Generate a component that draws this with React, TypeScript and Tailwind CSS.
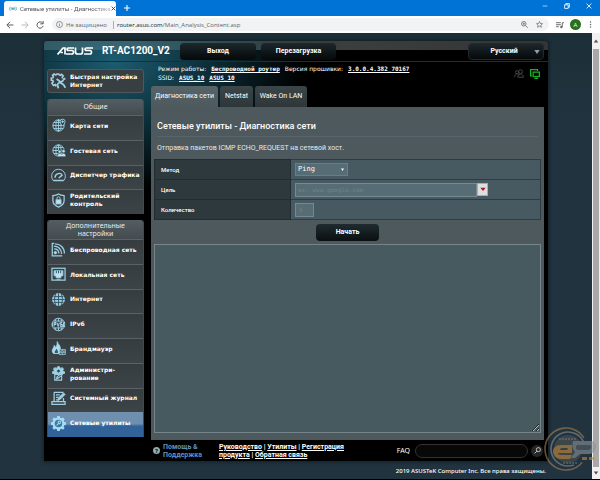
import React from "react";

type IconName =
  | "setup" | "map" | "guest" | "traffic" | "parental" | "wifi" | "lan"
  | "globe" | "ipv6" | "firewall" | "admin" | "log" | "tools";

const gearPath =
  "M10 1.5h4l.6 2.8 2 .9 2.5-1.5 2.7 2.8-1.5 2.4.9 2.1 2.8.6v3.9l-2.8.7-.9 2 1.5 2.5-2.7 2.7-2.5-1.5-2 .9-.6 2.7h-4l-.6-2.7-2-.9-2.5 1.5-2.7-2.7 1.5-2.5-.9-2L0 15.5v-3.9l2.8-.6.9-2.1-1.5-2.4 2.7-2.8 2.5 1.5 2-.9z";

function Globe() {
  return (
    <>
      <circle cx="12" cy="12" r="9" />
      <ellipse cx="12" cy="12" rx="4.2" ry="9" />
      <path d="M12 3v18M3 12h18M4.5 7.3h15M4.5 16.7h15" />
    </>
  );
}

function MenuIcon({ name }: { name: IconName }) {
  const shapes: Record<IconName, React.ReactNode> = {
    setup: (
      <>
        <path d="M8 20l-1-3-3 1.500L1.500 15 3.500 12.500 3 10.500.500 10V6.500L3 6l.8-2L2.500 2 5 0l2.500 1.500L9 1l.5-1h3l.8 1.500L15 2l2-1.500L19.500 3 18 5.500l.5 1.500" strokeWidth="2.600" />
        <path d="M9 8l7 5 4-3M14 13l-4 4 2 6M15 14l5 3 3 5M19 9l4-2" strokeWidth="2.800" />
      </>
    ),
    map: (
      <>
        <Globe />
        <path d="M18.500 13s-4-4.200-4-7.200a4 4 0 0 1 8 0c0 3-4 7.200-4 7.200z" fill="#31424a" />
        <circle cx="18.500" cy="5.800" r="1.300" fill="#b5dff0" />
      </>
    ),
    guest: (
      <>
        <Globe />
        <g fill="#b9e2f2" stroke="#36444a" strokeWidth="1">
          <circle cx="14" cy="14" r="2.500" />
          <circle cx="20" cy="13" r="2.700" />
          <path d="M10 22c0-4 2-5.500 4-5.500s2.500 1 3 1.500c1-1.500 6.500-3.500 7 4z" />
        </g>
      </>
    ),
    traffic: (
      <>
        <path d="M3.500 20a11 11 0 1 1 17 0z" />
        <path d="M6.500 15.500a6.500 6.500 0 0 1 11-5M4 20h16M12.500 16l6-5" strokeWidth="2.200" />
      </>
    ),
    parental: (
      <>
        <path d="M12 1.500c3 2.200 6 2.500 9 2.500v8c0 5-4 8.500-9 10.500-5-2-9-5.500-9-10.500V4c3 0 6-.3 9-2.500z" strokeWidth="2" />
        <rect x="8" y="11" width="8" height="6.500" fill="#b9e2f2" />
        <path d="M9.500 11V8.500a2.500 2.500 0 0 1 5 0V11" />
      </>
    ),
    wifi: (
      <>
        <path d="M5 2H2v20h16M4.500 6.500c7 0 12.500 5 12.500 12.500M5 11c4.500 0 7.500 3 7.500 7.500M6 3c9 0 15.500 6 15.500 15.500" strokeWidth="2" />
        <circle cx="7" cy="17" r="2" fill="#b9e2f2" />
      </>
    ),
    lan: (
      <>
        <rect x="1.500" y="2" width="21" height="19" strokeWidth="2" />
        <path d="M5 6h14v8h-3v3H8v-3H5z" fill="#b9e2f2" />
        <path d="M8.500 6v4M12 6v4M15.500 6v4" stroke="#2f4b58" />
        <path d="M9 19.500h6" />
      </>
    ),
    globe: (
      <>
        <circle cx="12" cy="12" r="9.500" fill="#8fcbe4" />
        <path d="M12 2v20M2 12h20M4 7.300h16M4 16.700h16M7.500 3c-2.500 6-2.500 12 0 18M16.500 3c2.500 6 2.500 12 0 18" stroke="#31505f" strokeWidth="1.400" />
      </>
    ),
    ipv6: (
      <>
        <circle cx="12" cy="12" r="10" />
        <path d="M12 2v5M12 17v5M5 6.500h14M5 17.500h14M8 3.500L6.500 7M16 3.500L17.500 7M6.500 17L8 21M17.500 17L16 21" />
        <path d="M2 9v6M5 15V9h2.500v3H5M9.500 9l2 6 2-6M18 9h-2.500v6H18v-3h-2.500M20 9h2.500M20 9v6h2.500" strokeWidth="1.700" />
      </>
    ),
    firewall: (
      <>
        <path d="M10 1c1 4 5 6 5 11l-2 2v6H4C-1 14 5 12 5 7c1.500 1 2 2 2 3.500C10 8 10 4 10 1z" fill="#a9dcf0" />
        <path d="M8.500 12c1 2 3 3 2.500 7H6.500C4.500 16 8.500 15 8.500 12z" fill="#3b5560" stroke="none" />
        <path d="M13 13.500h10v8H13zM13 16h10M13 18.700h10M18 13.500V16M16 16v2.700M20.500 16v2.700M18 18.700v3" strokeWidth="1.200" />
      </>
    ),
    admin: (
      <>
        <path d="M10.500 1h3l.5 2 2 .8L18 2.500 20 5l-1.200 1.700.7 2 2 .3v3h-2.200l-.8 1.500H5.500L4.700 12H2.500V9l2-.3.700-2L4 5l2-2.500 2 1.300 2-.8z" fill="#9cd3e9" />
        <circle cx="12" cy="8" r="3" fill="#36444a" />
        <path d="M6 14.500v8h11v-8M9 20l1-3 5.500-4.500 2 2-5.500 4.500z" strokeWidth="1.800" />
      </>
    ),
    log: (
      <>
        <path d="M5 2h15M5 2v15M20 11v6M1.500 17h21v4.500h-21zM8 6h6M8 10h4M8 14h3" strokeWidth="2" />
        <path d="M11 15l1-4 8-8 2.500 2.500-8 8z" fill="#9cd3e9" />
      </>
    ),
    tools: (
      <>
        <path d={gearPath} transform="translate(0 -1.500)" fill="#a8dcf3" stroke="none" />
        <circle cx="12" cy="12" r="6" fill="#397ba8" stroke="none" />
        <path d="M9 15l4-4M12 8.500c2-1.500 4 .5 3.500 2.500l-2 1.500-2-2z" strokeWidth="1.800" />
      </>
    ),
  };
  return (
    <svg viewBox="0 0 24 24" className="size-[15px] shrink-0 overflow-visible" fill="none" stroke="#9dd0e4" strokeWidth="1.5" aria-hidden="true">
      {shapes[name]}
    </svg>
  );
}

type Item = { icon: IconName; lines: string[]; active?: boolean };

const general: Item[] = [
  { icon: "map", lines: ["Карта сети"] },
  { icon: "guest", lines: ["Гостевая сеть"] },
  { icon: "traffic", lines: ["Диспетчер трафика"] },
  { icon: "parental", lines: ["Родительский", "контроль"] },
];

const advanced: Item[] = [
  { icon: "wifi", lines: ["Беспроводная сеть"] },
  { icon: "lan", lines: ["Локальная сеть"] },
  { icon: "globe", lines: ["Интернет"] },
  { icon: "ipv6", lines: ["IPv6"] },
  { icon: "firewall", lines: ["Брандмауэр"] },
  { icon: "admin", lines: ["Администри-", "рование"] },
  { icon: "log", lines: ["Системный журнал"] },
  { icon: "tools", lines: ["Сетевые утилиты"], active: true },
];

function MenuRow({ icon, lines, active }: Item) {
  return (
    <a
      href="#"
      className={
        "flex flex-1 items-center gap-1 border-t pb-1 pl-[3px] font-['DejaVu_Sans',sans-serif] text-[6px] leading-[8px] font-bold whitespace-nowrap text-white " +
        (active
          ? "border-[#7391ad] bg-linear-to-b from-[#6f8fb0] from-45% to-[#30639a] to-55%"
          : "border-[#596367] bg-linear-to-b from-[#353d40] to-[#3c4447]")
      }
    >
      <MenuIcon name={icon} />
      <span>
        {lines.map((l) => (
          <span key={l} className="block">{l}</span>
        ))}
      </span>
    </a>
  );
}

function BrowserChrome() {
  return (
    <header className="shrink-0">
      <div className="flex h-4 items-end bg-[#0074d6] pl-1 font-['Open_Sans',sans-serif]">
        <div className="flex h-[15px] w-[112px] items-center rounded-t-[3px] bg-white pl-[5px]">
          <svg viewBox="0 0 12 12" className="size-2 shrink-0" fill="none" stroke="#4eaac4" strokeWidth="1.3" aria-hidden="true">
            <path d="M2 2.500c-1.500 2-1.500 4 0 6M10 2.500c1.500 2 1.500 4 0 6M4 3.500c-1 1.500-1 3 0 4M8 3.500c1 1.500 1 3 0 4" />
            <circle cx="6" cy="5.500" r="1.300" fill="#4eaac4" />
          </svg>
          <span className="ml-[3px] bg-linear-to-r from-[#45494d] from-80% to-[#c5c8ca] bg-clip-text font-[Roboto,sans-serif] text-[6px] leading-[10px] whitespace-nowrap text-transparent">
            Сетевые утилиты - Диагностика
          </span>
          <button aria-label="Закрыть вкладку" className="mr-1 ml-auto shrink-0">
            <svg viewBox="0 0 8 8" className="size-[5px]" stroke="#3c4043" strokeWidth="1.4"><path d="M1 1l6 6M7 1L1 7" /></svg>
          </button>
        </div>
        <button aria-label="Новая вкладка" className="mb-[5px] ml-2">
          <svg viewBox="0 0 8 8" className="size-[6px]" stroke="#fff" strokeWidth="1.4"><path d="M4 0v8M0 4h8" /></svg>
        </button>
        <div className="mr-2 mb-[7px] ml-auto flex items-center gap-4">
          <button aria-label="Свернуть"><svg viewBox="0 0 10 10" className="size-[6px]" stroke="#fff"><path d="M1 5h8" /></svg></button>
          <button aria-label="Развернуть"><svg viewBox="0 0 10 10" className="size-[6px]" fill="none" stroke="#fff" strokeWidth="1.4"><path d="M1 3h6v6H1zM3 3V1h6v6H7" /></svg></button>
          <button aria-label="Закрыть"><svg viewBox="0 0 10 10" className="size-[6px]" stroke="#fff" strokeWidth="1.4"><path d="M1 1l8 8M9 1L1 9" /></svg></button>
        </div>
      </div>
      <div className="flex h-[17px] items-center bg-white pl-[6px] font-['Open_Sans',sans-serif]">
        <div className="flex w-[38px] items-center gap-[7px]">
          <button aria-label="Назад"><svg viewBox="0 0 14 14" className="size-[8px]" fill="none" stroke="#55585c" strokeWidth="1.700"><path d="M13 7H2M7 1.500L1.500 7 7 12.500" /></svg></button>
          <button aria-label="Вперёд"><svg viewBox="0 0 14 14" className="size-[8px]" fill="none" stroke="#b5b7b9" strokeWidth="1.700"><path d="M1 7h11M7 1.500L12.500 7 7 12.500" /></svg></button>
          <button aria-label="Обновить"><svg viewBox="0 0 14 14" className="size-[8px]" fill="none" stroke="#55585c" strokeWidth="1.700"><path d="M11.800 4A5.500 5.500 0 1 0 12.500 8.500M12.500 0v5h-5" /></svg></button>
        </div>
        <div className="ml-2 flex h-[13px] flex-1 items-center rounded-full bg-[#f1f3f4] pr-[6px] pl-1 text-[#5f6368]">
          <svg viewBox="0 0 14 14" className="size-[7px]" fill="none" stroke="#5f6368" strokeWidth="1.3" aria-hidden="true"><circle cx="7" cy="7" r="6" /><path d="M7 6v4.500M7 3.500v1.200" /></svg>
          <span className="ml-[3px] text-[6px] leading-[10px] whitespace-nowrap">Не защищено</span>
          <span className="mr-[3px] ml-[6px] h-2 w-px bg-[#aaaeb2]" />
          <span className="text-[6px] leading-[10px] whitespace-nowrap"><span className="text-[#202124]">router.asus.com</span>/Main_Analysis_Content.asp</span>
          <div className="ml-auto flex items-center gap-2">
            <svg viewBox="0 0 14 14" className="size-[7px]" fill="none" stroke="#5f6368" strokeWidth="1.600" aria-hidden="true"><circle cx="5.500" cy="5.500" r="4.500" /><path d="M9 9l4.500 4.500M3.500 5.500h4M5.500 3.500v4" /></svg>
            <svg viewBox="0 0 14 14" className="size-[7px]" fill="none" stroke="#5f6368" strokeWidth="1.400" aria-hidden="true"><path d="M7 1l1.800 4 4.200.4-3.200 2.900.9 4.200L7 10.300l-3.700 2.200.9-4.200L1 5.400 5.200 5z" /></svg>
          </div>
        </div>
        <svg viewBox="0 0 14 14" className="ml-[7px] size-2" fill="none" stroke="#5f6368" strokeWidth="1.600" aria-hidden="true"><path d="M0 3h8.500M0 6.500h8.500M0 10h5M11 10V3h3" /><circle cx="9.500" cy="10.500" r="1.500" fill="#5f6368" /></svg>
        <span className="ml-[6px] flex size-[11px] items-center justify-center rounded-full bg-[#26701f] text-[6px] leading-none text-white">A</span>
        <button aria-label="Меню" className="mr-2 ml-2"><svg viewBox="0 0 4 14" className="h-[7px] w-[3px]" fill="#5f6368"><circle cx="2" cy="2" r="1.500" /><circle cx="2" cy="7" r="1.500" /><circle cx="2" cy="12" r="1.500" /></svg></button>
      </div>
    </header>
  );
}

function Sidebar() {
  return (
    <nav className="flex w-[97px] shrink-0 flex-col gap-[6px] pb-[3px]">
      <a href="#" className="flex h-6 items-center gap-1 rounded-[3px] border border-[#50585b] bg-[#373f42] pl-[3px] font-['DejaVu_Sans',sans-serif] text-[6px] leading-[8px] font-bold whitespace-nowrap text-white">
        <MenuIcon name="setup" />
        <span>Быстрая настройка<br />Интернет</span>
      </a>
      <section className="flex h-[115px] flex-col overflow-hidden rounded-t-[3px] border-x border-[#434b4e]">
        <h2 className="flex h-4 items-center justify-center bg-linear-to-b from-[#545e62] to-[#434b4f] font-['Noto_Sans',sans-serif] text-[7px] leading-[8px] text-[#e8ecee]">Общие</h2>
        {general.map((i) => <MenuRow key={i.icon} {...i} />)}
      </section>
      <section className="flex h-[217px] flex-col overflow-hidden rounded-t-[3px] border-x border-[#434b4e]">
        <h2 className="flex h-[19px] items-center justify-center bg-linear-to-b from-[#545e62] to-[#434b4f] text-center font-['Noto_Sans',sans-serif] text-[7px] leading-[8px] text-[#e8ecee]">Дополнительные<br />настройки</h2>
        {advanced.map((i) => <MenuRow key={i.icon} {...i} />)}
      </section>
    </nav>
  );
}

const labelCell = "w-[136px] border border-[#222d31] bg-[#2e393e] pl-[6px] text-left font-medium text-white";
const valueCell = "border border-[#2e3d43] bg-[#475a61] pl-1";

function Tools() {
  return (
    <section className="flex flex-1 flex-col bg-[#4d595d] px-[3px] pb-[7px] font-[Roboto,sans-serif] text-white">
      <h1 className="mx-[3px] flex h-[30px] items-center border-b border-[#59656a] pt-2 text-[9px] leading-[12px] font-medium whitespace-nowrap">
        Сетевые утилиты - Диагностика сети
      </h1>
      <p className="mx-[3px] flex h-[22px] items-center text-[7px] leading-[10px] text-[#e6eaeb]">
        Отправка пакетов ICMP ECHO_REQUEST на сетевой хост.
      </p>
      <table className="w-full border-collapse text-[6px] leading-[8px]">
        <tbody>
          <tr className="h-5">
            <th scope="row" className={labelCell}><label htmlFor="method">Метод</label></th>
            <td className={valueCell}>
              <div className="relative w-[53px]">
                <select id="method" className="block h-[13px] w-full appearance-none border border-[#6b7c84] bg-[#576d75] pl-[2px] font-['DejaVu_Sans_Mono',monospace] text-[7px] leading-[11px] text-white">
                  <option>Ping</option>
                  <option>Traceroute</option>
                  <option>Nslookup</option>
                </select>
                <svg viewBox="0 0 6 6" className="pointer-events-none absolute top-[5px] right-[4px] size-[3px]" fill="#fff" aria-hidden="true"><path d="M0 1h6L3 6z" /></svg>
              </div>
            </td>
          </tr>
          <tr className="h-5">
            <th scope="row" className={labelCell}><label htmlFor="target">Цель</label></th>
            <td className={valueCell}>
              <div className="flex items-start">
                <input id="target" placeholder="ex: www.google.com" className="block h-[14px] w-[182px] border border-[#778890] bg-[#576d75] pl-[2px] font-['DejaVu_Sans_Mono',monospace] text-[6px] text-white placeholder:text-[#748188]" />
                <button aria-label="Показать список" className="flex h-[13px] w-[11px] items-center justify-center border border-[#a8adb0] bg-[#dfdfdf]">
                  <svg viewBox="0 0 8 6" className="h-[4px] w-[6px]" fill="#a3161b"><path d="M0 1h8L4 6z" /></svg>
                </button>
              </div>
            </td>
          </tr>
          <tr className="h-5">
            <th scope="row" className={labelCell}><label htmlFor="count">Количество</label></th>
            <td className={valueCell}>
              <input id="count" placeholder="5" className="block h-[14px] w-[19px] border border-[#778890] bg-[#576d75] pl-[3px] font-['DejaVu_Sans_Mono',monospace] text-[6px] text-white placeholder:text-[#748188]" />
            </td>
          </tr>
        </tbody>
      </table>
      <button className="mx-auto mt-1 h-[17px] w-[63px] shrink-0 rounded-[4px] bg-linear-to-b from-[#202b2f] to-[#0b1012] text-[7px] leading-[9px] font-bold">Начать</button>
      <textarea aria-label="Результат" readOnly className="mt-[3px] block w-full flex-1 resize border border-[#76858b] bg-[#475a60]" />
    </section>
  );
}

function Footer() {
  return (
    <footer className="flex h-[21px] items-center bg-black pl-[109px] font-[Roboto,sans-serif] text-[7px] leading-[8px] font-bold whitespace-nowrap text-white">
      <span className="flex size-[7px] items-center justify-center rounded-full bg-[#93a9b2] text-[6px] leading-none text-black">?</span>
      <a href="#" className="ml-[3px] w-[56px] text-[#5f93c0]">Помощь &amp;<br />Поддержка</a>
      <div>
        <a href="#" className="underline">Руководство</a> | <a href="#" className="underline">Утилиты</a> | <a href="#" className="underline">Регистрация<br />продукта</a> | <a href="#" className="underline">Обратная связь</a>
      </div>
      <label htmlFor="faq" className="ml-auto font-['Noto_Sans',sans-serif] text-[7px] font-normal">FAQ</label>
      <input id="faq" className="ml-[5px] h-[14px] w-[113px] rounded-full border border-[#333] bg-[#080808] px-1" />
      <button aria-label="Поиск" className="mr-[5px] ml-[3px] flex size-3 items-center justify-center rounded-full bg-[#262626]">
        <svg viewBox="0 0 12 12" className="size-[7px]" fill="none" stroke="#ccc" strokeWidth="1.600"><circle cx="7.500" cy="4.500" r="3.500" /><path d="M5 7l-4 4" /></svg>
      </button>
    </footer>
  );
}

function Watermark() {
  return (
    <svg viewBox="0 0 54 48" className="pointer-events-none absolute right-[3px] bottom-[5px] h-12 w-[54px] opacity-60" fill="none" aria-hidden="true">
      <circle cx="23" cy="23" r="21" stroke="#a98252" strokeWidth="1.600" strokeDasharray="105 27" transform="rotate(40 23 23)" />
      <circle cx="25" cy="23" r="17" stroke="#8e8f8e" strokeWidth="1.600" strokeDasharray="80 27" transform="rotate(70 25 23)" />
      <circle cx="25" cy="23" r="14" fill="#6b665e" opacity=".6" />
      <path d="M29 19H18c-5 0-8 3-8 6s2 8 8 8h9l2-4H18c-2 0-3-1-3-2h14z" fill="#d0913e" />
      <path d="M17 23c1-1 2-1 3-1h5l-1 2h-7z" fill="#4a4640" />
      <path d="M30 15h18c4 0 6 3 5 7s-4 6-8 6h-8l-5 4h-4l4-6c-3-3-3-7-2-11z" fill="#8f9499" />
      <path d="M34 19h12c2 0 3 1 2 3s-2 2-4 2h-9c-2 0-3-3-1-5z" fill="#5b6368" />
      <path d="M39 31h5v3h-5zM46 31h6v3h-6z" fill="#c98b3c" />
      <path d="M16 13h18M20 37h14" stroke="#a3a7a8" strokeDasharray="2 1" />
    </svg>
  );
}

export default function App() {
  return (
    <div className="relative flex min-h-screen flex-col border-b border-black bg-[#21323e]">
      <BrowserChrome />
      <div className="flex flex-1">
        <main className="flex-1 bg-linear-to-b from-[#1c2f37] to-[#21333f] to-20% pt-2">
          <div className="mx-auto max-w-[504px]">
            <div className="rounded-t-[3px] bg-black bg-[radial-gradient(ellipse_190px_130px_at_70px_20px,#1d5c70_0%,#0e323d_45%,#000_100%)] shadow-[0_0_4px_#0a141a]">
              <div className="flex h-[21px] items-center rounded-t-[3px] border-b border-[#242b34] bg-[linear-gradient(90deg,#5d868f70_0%,#587a8270_30%,#777a7c80_60%,#68686880_100%)] bg-[length:100%_9px] bg-no-repeat pl-[13px]">
                <svg viewBox="0 0 72 16" className="h-2 w-9 shrink-0" fill="none" stroke="#fff" strokeWidth="3.400" role="img" aria-label="ASUS">
                  <path d="M1 15L12 2h4v13M7 11h5M34 2H23c-4 0-4 5 0 5h7c4 0 4 7 0 7H18M37 1v9q0 4 4 4h6q4 0 4-4V1M72 2H59c-4 0-4 5 0 5h7c4 0 4 7 0 7H54" />
                </svg>
                <span className="ml-[9px] font-[Roboto,sans-serif] text-[10px] leading-[12px] font-bold whitespace-nowrap text-white">RT-AC1200_V2</span>
                <div className="mr-[4px] ml-auto flex font-[Roboto,sans-serif] text-[7px] leading-[9px] font-bold text-white">
                  <button className="h-[17px] w-[76px] rounded-[4px] bg-linear-to-b from-[#1d282c] to-[#06090a]">Выход</button>
                  <button className="ml-[5px] h-[17px] w-[75px] rounded-[4px] bg-linear-to-b from-[#1d282c] to-[#06090a]">Перезагрузка</button>
                  <div className="relative ml-[132px] w-[76px]">
                    <select aria-label="Язык" className="block h-[17px] w-full appearance-none rounded-[4px] border border-[#22292c] bg-linear-to-b from-[#1d282c] to-[#06090a] pr-1 text-center">
                      <option>Русский</option>
                      <option>English</option>
                    </select>
                    <svg viewBox="0 0 8 6" className="pointer-events-none absolute top-[7px] right-[4px] h-1 w-[6px]" fill="#8ba4ae" aria-hidden="true"><path d="M0 0h8L4 6z" /></svg>
                  </div>
                </div>
              </div>
              <div className="flex pt-[7px] pr-1 pl-[3px]">
                <Sidebar />
                <div className="-mt-[5px] ml-[7px] flex flex-1 flex-col">
                  <div className="flex h-[21px] items-start justify-between pr-1 pl-[7px] font-['DejaVu_Sans',sans-serif] text-[6px] leading-[9px] whitespace-nowrap text-white">
                    <div>
                      <div className="flex gap-[5px]">
                        <span>Режим работы:</span>
                        <a href="#" className="font-['DejaVu_Sans_Mono',monospace] font-bold underline">Беспроводной роутер</a>
                        <span>Версия прошивки:</span>
                        <a href="#" className="font-['DejaVu_Sans_Mono',monospace] font-bold underline">3.0.0.4.382_70167</a>
                      </div>
                      <div className="flex gap-[5px]">
                        <span>SSID:</span>
                        <a href="#" className="font-['DejaVu_Sans_Mono',monospace] font-bold underline">ASUS_10</a>
                        <a href="#" className="font-['DejaVu_Sans_Mono',monospace] font-bold underline">ASUS_10</a>
                      </div>
                    </div>
                    <div className="flex gap-[6px] pt-[5px]">
                      <svg viewBox="0 0 16 14" className="h-[9px] w-[10px]" fill="none" stroke="#4a4a4a" strokeWidth="1.500" aria-hidden="true"><circle cx="10.500" cy="4" r="3" /><circle cx="5" cy="5" r="2.500" /><path d="M1 13c0-7 7-7 8-3M6 13c0-7 9-7 9 0z" /></svg>
                      <svg viewBox="0 0 16 16" className="size-[10px]" fill="none" stroke="#18b52a" strokeWidth="2" aria-hidden="true"><path d="M3 11H1V1h11v2" /><rect x="5" y="5" width="10" height="7" /><path d="M7 15h6" /></svg>
                    </div>
                  </div>
                  <div role="tablist" className="flex h-[22px] gap-[2px] pt-px font-[Roboto,sans-serif] text-[7px] whitespace-nowrap text-white">
                    <button role="tab" aria-selected="true" className="w-[67px] rounded-t-[3px] bg-linear-to-b from-[#596468] to-[#4d595d]">Диагностика сети</button>
                    <button role="tab" className="w-[33px] rounded-t-[3px] bg-linear-to-b from-[#3c4649] to-[#2d3639]">Netstat</button>
                    <button role="tab" className="w-[52px] rounded-t-[3px] bg-linear-to-b from-[#3c4649] to-[#2d3639]">Wake On LAN</button>
                  </div>
                  <Tools />
                </div>
              </div>
              <Footer />
            </div>
            <p className="pt-[6px] pr-[2px] pb-1 text-right font-['Noto_Sans',sans-serif] text-[6px] leading-[8px] font-medium text-white">2019 ASUSTeK Computer Inc. Все права защищены.</p>
          </div>
        </main>
        <div className="flex w-2 flex-col items-center bg-[#f1f1f1]" aria-hidden="true">
          <svg viewBox="0 0 8 8" className="h-4 w-[6px]" fill="#505050"><path d="M1 6h6L4 2z" /></svg>
          <div className="w-[6px] flex-1 bg-[#a8a8a8]" />
          <svg viewBox="0 0 8 8" className="h-3 w-[6px]" fill="#505050"><path d="M1 2h6L4 6z" /></svg>
        </div>
      </div>
      <Watermark />
    </div>
  );
}
